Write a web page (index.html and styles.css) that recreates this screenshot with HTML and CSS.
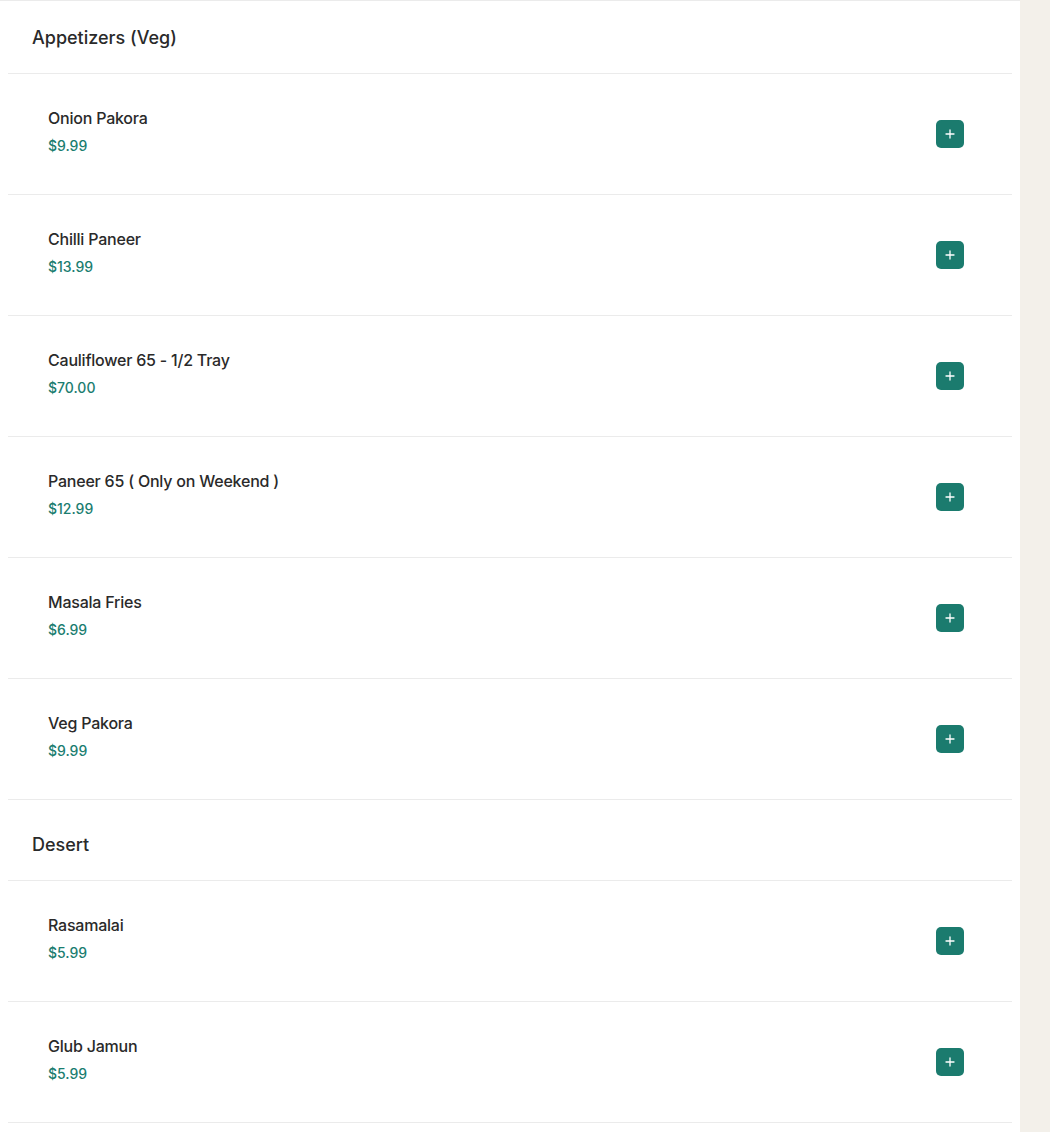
FILE: index.html
```html
<!DOCTYPE html>
<html>
<head>
<meta charset="utf-8">
<link rel="stylesheet" href="styles.css">
</head>
<body>
<div class="page">
  <main class="main">
    <section class="section first">
      <h2 class="section-title">Appetizers (Veg)</h2>
      <div class="item"><div class="info"><div class="name">Onion Pakora</div><div class="price">$9.99</div></div><button class="add"><svg viewBox="0 0 10 10" width="10" height="10"><path d="M5 1v8M1 5h8" stroke="#fff" stroke-width="1.3" stroke-linecap="round"/></svg></button></div>
      <div class="item"><div class="info"><div class="name">Chilli Paneer</div><div class="price">$13.99</div></div><button class="add"><svg viewBox="0 0 10 10" width="10" height="10"><path d="M5 1v8M1 5h8" stroke="#fff" stroke-width="1.3" stroke-linecap="round"/></svg></button></div>
      <div class="item"><div class="info"><div class="name">Cauliflower 65 - 1/2 Tray</div><div class="price">$70.00</div></div><button class="add"><svg viewBox="0 0 10 10" width="10" height="10"><path d="M5 1v8M1 5h8" stroke="#fff" stroke-width="1.3" stroke-linecap="round"/></svg></button></div>
      <div class="item"><div class="info"><div class="name">Paneer 65 ( Only on Weekend )</div><div class="price">$12.99</div></div><button class="add"><svg viewBox="0 0 10 10" width="10" height="10"><path d="M5 1v8M1 5h8" stroke="#fff" stroke-width="1.3" stroke-linecap="round"/></svg></button></div>
      <div class="item"><div class="info"><div class="name">Masala Fries</div><div class="price">$6.99</div></div><button class="add"><svg viewBox="0 0 10 10" width="10" height="10"><path d="M5 1v8M1 5h8" stroke="#fff" stroke-width="1.3" stroke-linecap="round"/></svg></button></div>
      <div class="item"><div class="info"><div class="name">Veg Pakora</div><div class="price">$9.99</div></div><button class="add"><svg viewBox="0 0 10 10" width="10" height="10"><path d="M5 1v8M1 5h8" stroke="#fff" stroke-width="1.3" stroke-linecap="round"/></svg></button></div>
    </section>
    <section class="section">
      <h2 class="section-title">Desert</h2>
      <div class="item"><div class="info"><div class="name">Rasamalai</div><div class="price">$5.99</div></div><button class="add"><svg viewBox="0 0 10 10" width="10" height="10"><path d="M5 1v8M1 5h8" stroke="#fff" stroke-width="1.3" stroke-linecap="round"/></svg></button></div>
      <div class="item"><div class="info"><div class="name">Glub Jamun</div><div class="price">$5.99</div></div><button class="add"><svg viewBox="0 0 10 10" width="10" height="10"><path d="M5 1v8M1 5h8" stroke="#fff" stroke-width="1.3" stroke-linecap="round"/></svg></button></div>
    </section>
  </main>
  <aside class="side"></aside>
</div>
</body>
</html>
```
FILE: styles.css
```css
html, body {
  margin: 0;
  padding: 0;
  background: #ffffff;
  font-family: Inter, "Noto Sans", "Liberation Sans", sans-serif;
  color: #2a2a2a;
}
.page {
  display: flex;
  min-height: 1132px;
}
.main {
  width: 1020px;
  flex: none;
  background: #ffffff;
  border-top: 1px solid #ebebeb;
  padding: 0 8px;
  box-sizing: border-box;
}
.side {
  flex: 1;
  background: #f3f0ea;
}
.section {
  padding-top: 8px;
}
.section.first {
  padding-top: 0;
}
.section-title {
  margin: 0;
  padding: 25px 24px 23px;
  line-height: 24px;
  font-size: 18px;
  font-weight: 500;
  color: #2a2a2a;
  border-bottom: 1px solid #ebebeb;
}
.item {
  display: flex;
  align-items: center;
  justify-content: space-between;
  padding: 0 48px 0 40px;
  border-bottom: 1px solid #ebebeb;
}
.info {
  padding: 32px 0 38px;
}
.name {
  font-size: 16px;
  line-height: 24px;
  font-weight: 500;
  letter-spacing: -0.22px;
  color: #2a2a2a;
}
.price {
  margin-top: 5px;
  font-size: 14px;
  line-height: 21px;
  font-weight: 500;
  color: #1b7d70;
}
.add {
  width: 28px;
  height: 28px;
  border: none;
  border-radius: 5px;
  background: #1b7b6e;
  padding: 0;
  display: flex;
  align-items: center;
  justify-content: center;
  cursor: pointer;
}
```
